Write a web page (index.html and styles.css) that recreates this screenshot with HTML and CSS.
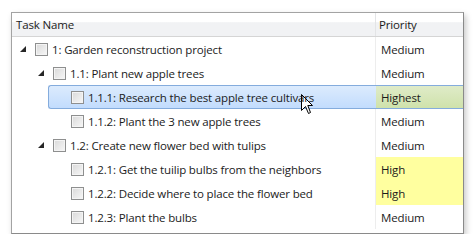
FILE: index.html
```html
<!DOCTYPE html>
<html>
<head>
<meta charset="utf-8">
<link rel="stylesheet" href="styles.css">
</head>
<body>
<div class="grid">
  <div class="head">
    <div class="hc task">Task Name</div>
    <div class="hc prio">Priority</div>
  </div>
  <div class="body">
    <div class="row l0">
      <div class="task"><span class="exp"></span><span class="cb"></span><span class="txt">1: Garden reconstruction project</span></div>
      <div class="prio">Medium</div>
    </div>
    <div class="row l1">
      <div class="task"><span class="exp"></span><span class="cb"></span><span class="txt">1.1: Plant new apple trees</span></div>
      <div class="prio">Medium</div>
    </div>
    <div class="row l2 sel">
      <div class="task"><span class="sel-bg"></span><span class="exp none"></span><span class="cb"></span><span class="txt">1.1.1: Research the best apple tree cultivars</span></div>
      <div class="prio highest">Highest</div>
    </div>
    <div class="row l2">
      <div class="task"><span class="exp none"></span><span class="cb"></span><span class="txt">1.1.2: Plant the 3 new apple trees</span></div>
      <div class="prio">Medium</div>
    </div>
    <div class="row l1">
      <div class="task"><span class="exp"></span><span class="cb"></span><span class="txt">1.2: Create new flower bed with tulips</span></div>
      <div class="prio">Medium</div>
    </div>
    <div class="row l2">
      <div class="task"><span class="exp none"></span><span class="cb"></span><span class="txt">1.2.1: Get the tuilip bulbs from the neighbors</span></div>
      <div class="prio high">High</div>
    </div>
    <div class="row l2">
      <div class="task"><span class="exp none"></span><span class="cb"></span><span class="txt">1.2.2: Decide where to place the flower bed</span></div>
      <div class="prio high">High</div>
    </div>
    <div class="row l2">
      <div class="task"><span class="exp none"></span><span class="cb"></span><span class="txt">1.2.3: Plant the bulbs</span></div>
      <div class="prio">Medium</div>
    </div>
  </div>
  <svg class="cursor" width="13" height="21" viewBox="0 0 13 21"><path d="M0.5 0.5 L0.5 16.5 L4.5 12.5 L7.5 19.5 L9.5 18.5 L6.8 11.5 L11.5 11.5 Z" fill="#fff" stroke="#000" stroke-width="1" stroke-linejoin="miter"/></svg>
</div>
</body>
</html>
```
FILE: styles.css
```css
html, body { margin: 0; padding: 0; background: #fff; }
body { font-family: "Open Sans", "Noto Sans", sans-serif; font-size: 11.5px; letter-spacing: -0.15px; color: #1b1b1b; }
.grid {
  position: relative;
  margin: 12px 0 0 11px;
  width: 451px;
  height: 220px;
  border: 1px solid #a3a3a3;
  border-right-color: #8a8a8a;
  border-bottom-color: #8a8a8a;
  box-shadow: 2px 3px 6px rgba(0,0,0,0.22);
  background: #fff;
  overflow: hidden;
}
.head {
  display: flex;
  height: 23px;
  border-bottom: 1px solid #d5d5d5;
  background: linear-gradient(#ffffff 0%, #ffffff 38%, #f1f2f4 42%, #f1f2f4 100%);
}
.hc { display: flex; align-items: center; }
.head .task { width: 364px; padding-left: 4px; box-sizing: border-box; border-right: 1px solid #e3e4e6; }
.head .prio { padding-left: 3px; }
.body { display: flex; flex-direction: column; }
.row { display: flex; height: 24px; position: relative; }
.row .task { position: relative; width: 364px; display: flex; align-items: center; border-right: 1px solid #ededed; padding-left: 8px; box-sizing: border-box; }
.row.l1 .task { padding-left: 26px; }
.row.l2 .task { padding-left: 44px; }
.row .prio { flex: 1; display: flex; align-items: center; padding-left: 5px; }
.prio.high { background: #ffff9f; }
.exp { width: 6px; height: 6px; margin-right: 9px; position: relative; z-index: 1; flex: none; }
.exp:not(.none)::before {
  content: ""; position: absolute; left: 0; top: 0; width: 0; height: 0;
  border-style: solid; border-width: 0 0 6px 6px;
  border-color: transparent transparent #262626 transparent;
}
.cb {
  width: 11px; height: 11px; border: 1px solid #8e8f8f;
  background: linear-gradient(135deg, #d9d9d9, #f7f7f7);
  box-shadow: inset 0 0 0 1px #f4f4f4;
  margin-right: 4px; position: relative; z-index: 1; flex: none;
}
.txt { position: relative; z-index: 1; white-space: nowrap; }
.sel-bg {
  position: absolute; left: 36px; right: -1px; top: 0; bottom: 0;
  border: 1px solid #84acdd; border-right: none; border-radius: 3px 0 0 3px;
  background: linear-gradient(#dcebfd, #c2dcfd);
}
.row.sel .task { border-right-color: #84acdd; }
.prio.highest {
  background: linear-gradient(#dfebc8, #cfe2ab);
  border-top: 1px solid #84acdd; border-bottom: 1px solid #84acdd;
}
.cursor { position: absolute; left: 289px; top: 81px; }
```
